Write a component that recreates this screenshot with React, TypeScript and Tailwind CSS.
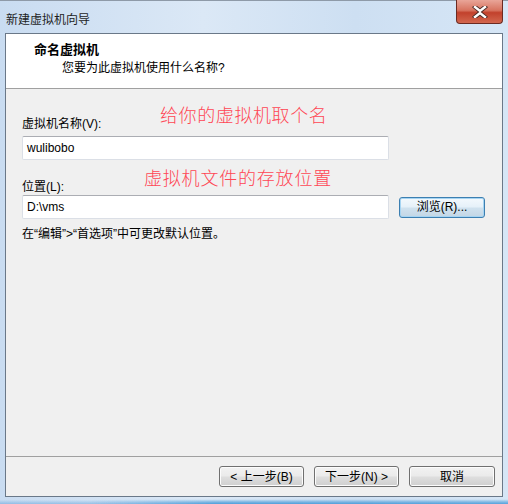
import React from "react";

const uiFont = "font-['Liberation_Sans','Noto_Sans_CJK_SC',sans-serif]";

const WinButton = ({
  label,
  focused,
  className,
}: {
  label: string;
  focused?: boolean;
  className?: string;
}) => (
  <div
    className={`flex h-[21px] items-center justify-center rounded-[3px] border text-[12px] leading-none text-black ${
      focused
        ? "border-[#3c7fb1] bg-[linear-gradient(#f4f9fd_0%,#e6f1f9_45%,#cfe1ee_55%,#c3d6e5_100%)] shadow-[inset_0_0_0_1px_#a6d4f2]"
        : "border-[#707070] bg-[linear-gradient(#f2f2f2_0%,#ebebeb_45%,#dddddd_55%,#cfcfcf_100%)] shadow-[inset_0_0_0_1px_#fcfcfc]"
    } ${className ?? ""}`}
  >
    {label}
  </div>
);

const TextBox = ({ value }: { value: string }) => (
  <div className="flex h-[24px] w-[367px] items-center rounded-[2px] border border-[#dbdfe6] border-t-[#abadb3] bg-white pl-[4px] text-[12px] text-black">
    {value}
  </div>
);

export default function App() {
  return (
    <div
      className={`flex h-[504px] w-[508px] flex-col overflow-hidden bg-[linear-gradient(90deg,#c9dcf1_0%,#dbe8f6_40%,#cddff2_70%,#d6e6f6_100%)] ${uiFont}`}
    >
      {/* title bar */}
      <div className="relative flex h-[33px] shrink-0 items-start border-t border-[#8e9aa8] px-[6px]">
        <span className="mt-[11px] text-[12px] leading-[16px] text-[#1e1e1e]">
          新建虚拟机向导
        </span>
        <div className="absolute right-[5px] top-[-1px] flex h-[24px] w-[47px] items-center justify-center rounded-b-[4px] border border-t-0 border-[#6b2a22] bg-[linear-gradient(#e9a598_0%,#d7735f_45%,#c2412c_55%,#d2674f_100%)]">
          <svg width="16" height="12" viewBox="0 0 16 12">
            <path
              d="M3 1 L8 5 L13 1 M3 11 L8 7 L13 11"
              stroke="#4a2a26"
              strokeWidth="4.2"
              fill="none"
              strokeLinecap="square"
            />
            <path
              d="M3 1 L8 5 L13 1 M3 11 L8 7 L13 11"
              stroke="#ffffff"
              strokeWidth="2.4"
              fill="none"
              strokeLinecap="square"
            />
          </svg>
        </div>
      </div>

      {/* client area */}
      <div className="mx-[5px] flex flex-1 flex-col border border-[#6a7888]">
        <div className="flex h-[55px] shrink-0 flex-col border-b border-[#a0a0a0] bg-white pl-[28px] pt-[8px]">
          <span className="text-[13px] font-bold leading-[16px] text-black">
            命名虚拟机
          </span>
          <span className="mt-[2px] pl-[28px] text-[12px] leading-[16px] text-black">
            您要为此虚拟机使用什么名称?
          </span>
        </div>

        <div className="flex flex-1 flex-col bg-[#f0f0f0] pl-[16px] pt-[15px]">
          <div className="flex items-end">
            <span className="mb-[2px] w-[138px] text-[12px] leading-[16px] text-black">
              虚拟机名称(V):
            </span>
            <span className="mb-[6px] text-[18px] font-light leading-[24px] tracking-[0.6px] text-[#ff4654]">
              给你的虚拟机取个名
            </span>
          </div>
          <div className="mt-[2px]">
            <TextBox value="wulibobo" />
          </div>

          <div className="mt-[7px] flex items-end">
            <span className="mb-[-2px] w-[122px] text-[12px] leading-[16px] text-black">
              位置(L):
            </span>
            <span className="mb-[2px] text-[18px] font-light leading-[24px] tracking-[0.8px] text-[#ff4654]">
              虚拟机文件的存放位置
            </span>
          </div>
          <div className="mt-[2px] flex items-center gap-[10px]">
            <TextBox value="D:\vms" />
            <WinButton label="浏览(R)..." focused className="w-[86px]" />
          </div>

          <span className="mt-[7px] text-[12px] leading-[16px] text-black">
            在“编辑”&gt;“首选项”中可更改默认位置。
          </span>
        </div>

        <div className="h-px shrink-0 bg-[#a0a0a0]" />
        <div className="flex h-[39px] shrink-0 items-start justify-end gap-[10px] bg-[#f0f0f0] pr-[7px] pt-[9px]">
          <WinButton label="< 上一步(B)" className="w-[85px]" />
          <WinButton label="下一步(N) >" className="w-[85px]" />
          <WinButton label="取消" className="w-[86px]" />
        </div>
      </div>

      {/* bottom frame */}
      <div className="h-[7px] shrink-0 bg-[linear-gradient(180deg,transparent_0%,transparent_40%,rgba(40,130,205,0.35)_100%)]">
        <div className="ml-[90px] h-full bg-[linear-gradient(90deg,rgba(60,150,215,0)_0%,rgba(60,150,215,0.8)_30%,rgba(60,150,215,0.7)_100%)] [mask-image:linear-gradient(180deg,transparent_30%,black_100%)]" />
      </div>
    </div>
  );
}
